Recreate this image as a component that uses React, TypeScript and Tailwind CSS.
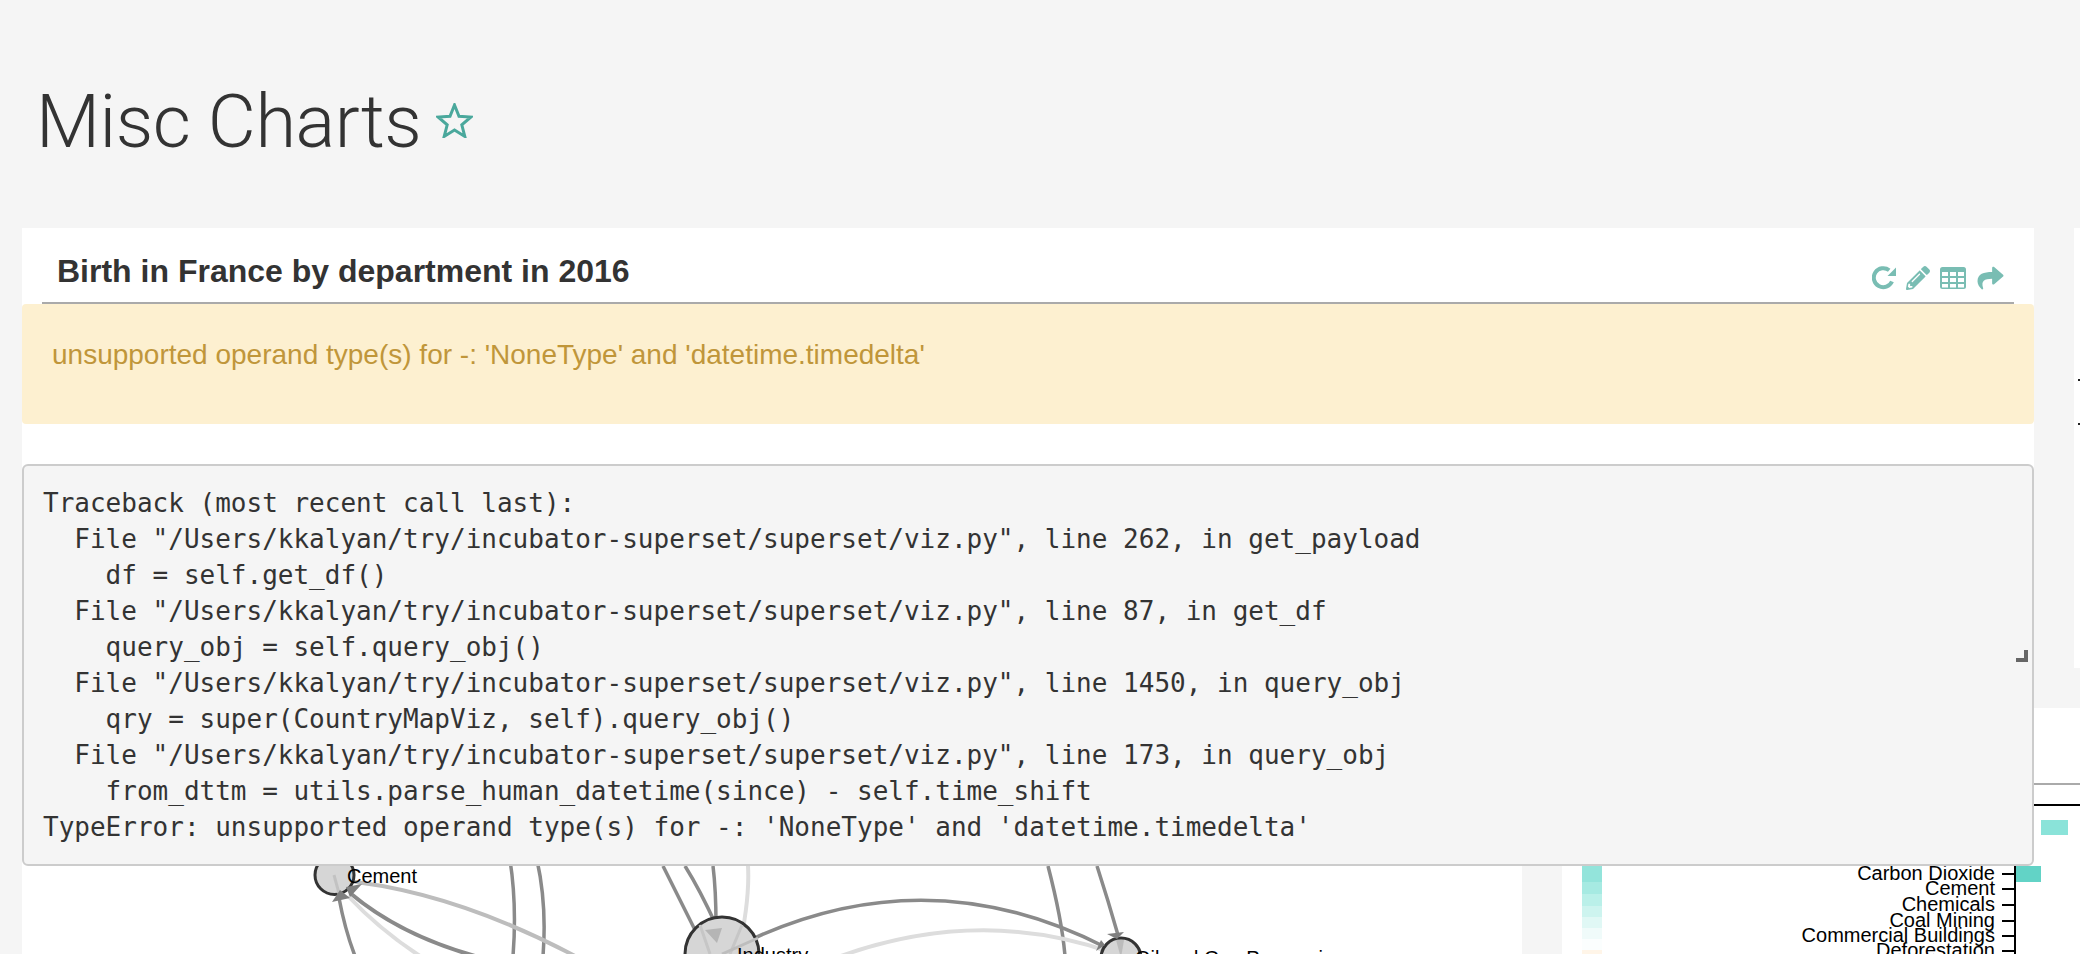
import { FaPencilAlt, FaShare } from "react-icons/fa";

const TRACE = `Traceback (most recent call last):
  File "/Users/kkalyan/try/incubator-superset/superset/viz.py", line 262, in get_payload
    df = self.get_df()
  File "/Users/kkalyan/try/incubator-superset/superset/viz.py", line 87, in get_df
    query_obj = self.query_obj()
  File "/Users/kkalyan/try/incubator-superset/superset/viz.py", line 1450, in query_obj
    qry = super(CountryMapViz, self).query_obj()
  File "/Users/kkalyan/try/incubator-superset/superset/viz.py", line 173, in query_obj
    from_dttm = utils.parse_human_datetime(since) - self.time_shift
TypeError: unsupported operand type(s) for -: 'NoneType' and 'datetime.timedelta'`;

const LEGEND = [
  [866, 16, "#93e4db"],
  [882, 12, "#a6eae2"],
  [894, 12, "#baf0e9"],
  [906, 11, "#cdf4ef"],
  [917, 11, "#e0f8f5"],
  [928, 11, "#f0fbfa"],
  [939, 11, "#fbfefe"],
] as const;

const AXIS = [
  ["Carbon Dioxide", 880, 874],
  ["Cement", 895, 889],
  ["Chemicals", 911, 905],
  ["Coal Mining", 927, 921],
  ["Commercial Buildings", 942, 936],
  ["Deforestation", 957, 951],
] as const;

function RefreshIcon() {
  return (
    <svg viewBox="0 0 24 24" className="w-[24px] h-[24px]" fill="none">
      <path d="M20 15.5 A9.5 9.5 0 1 1 17.2 4.2" stroke="currentColor" strokeWidth="4" />
      <polygon points="24,1.5 24,10 15.5,10" fill="currentColor" />
    </svg>
  );
}

function TableIcon() {
  return (
    <svg viewBox="0 0 26 22" className="w-[26px] h-[22px]">
      <rect width="26" height="22" rx="2.5" fill="currentColor" />
      <g fill="#ffffff">
        <rect x="2" y="5" width="6" height="4" />
        <rect x="10" y="5" width="6" height="4" />
        <rect x="18" y="5" width="6" height="4" />
        <rect x="2" y="11" width="6" height="4" />
        <rect x="10" y="11" width="6" height="4" />
        <rect x="18" y="11" width="6" height="4" />
        <rect x="2" y="17" width="6" height="3.5" />
        <rect x="10" y="17" width="6" height="3.5" />
        <rect x="18" y="17" width="6" height="3.5" />
      </g>
    </svg>
  );
}

function Network() {
  return (
    <svg viewBox="22 708 1500 246" className="block w-full h-full" fill="none">
      <g stroke="#8a8a8a" strokeWidth="3.5">
        <path d="M339 898 Q345 930 355 956" />
        <path d="M510 860 Q517 905 513 956" />
        <path d="M537 860 Q547 905 543 956" />
        <path d="M663 866 Q680 900 700 940" />
        <path d="M685 866 Q700 890 716 925" />
        <path d="M713 866 Q716 890 716 925" />
        <path d="M1048 866 Q1062 920 1065 956" />
        <path d="M1097 866 Q1108 900 1118 935" />
        <path d="M722 954 Q915 850 1105 947" />
        <path d="M350 893 Q400 935 475 956" strokeWidth="4" />
      </g>
      <g strokeWidth="4">
        <path d="M338 880 Q450 890 575 956" stroke="#bdbdbd" />
        <path d="M348 896 Q380 930 420 956" stroke="#dddddd" />
        <path d="M748 866 Q750 900 738 954" stroke="#dddddd" />
        <path d="M830 960 Q975 905 1110 952" stroke="#dddddd" />
      </g>
      <circle cx="334.5" cy="875" r="19.5" fill="#d6d6d6" stroke="#333333" strokeWidth="3" />
      <path d="M334 875 L340 897" stroke="#c2c2c2" strokeWidth="3" />
      <polygon points="332,902 350,898 340,890" fill="#7f7f7f" />
      <polygon points="362,884 350,897 346,887" fill="#7f7f7f" />
      <circle cx="722" cy="954" r="37" fill="#d6d6d6" stroke="#333333" strokeWidth="3" />
      <path d="M700 925 L710 954 M742 925 L730 954" stroke="#c6c6c6" strokeWidth="3" />
      <path d="M722 954 L758 938" stroke="#bdbdbd" strokeWidth="3" />
      <polygon points="705,930 722,928 717,943" fill="#b5b5b5" />
      <circle cx="1121" cy="958" r="20" fill="#d6d6d6" stroke="#333333" strokeWidth="3" />
      <polygon points="1121,958 1116,940 1124,940" fill="#bcbcbc" />
      <polygon points="1107,934 1124,932 1117,939" fill="#7f7f7f" />
      <polygon points="1096,951 1101,940 1105,945" fill="#7f7f7f" />
      <g fill="#000000" fontSize="20" fontFamily="'Liberation Sans', Arial, sans-serif">
        <text x="347" y="883">Cement</text>
        <text x="737" y="962">Industry</text>
        <text x="1135" y="965">Oil and Gas Processing</text>
      </g>
    </svg>
  );
}

function BarChart() {
  return (
    <svg viewBox="1562 708 518 246" className="block w-full h-full" fill="none">
      {LEGEND.map(([y, h, c]) => (
        <rect key={c} x="1582" y={y} width="20" height={h} fill={c} />
      ))}
      <rect x="1582" y="950" width="20" height="4" fill="#fff5e8" />
      <rect x="1562" y="783" width="518" height="2" fill="#aaaaaa" />
      <rect x="1900" y="804" width="180" height="2" fill="#000000" />
      <rect x="2041" y="820" width="27" height="15" fill="#8ae3d9" />
      <rect x="2015" y="866" width="26" height="16" fill="#62d3c6" />
      <rect x="2014" y="806" width="2" height="148" fill="#000000" />
      {AXIS.map(([label, base, tick]) => (
        <g key={label}>
          <rect x="2002" y={tick - 1} width="12" height="2" fill="#000000" />
          <text
            x="1995"
            y={base}
            textAnchor="end"
            fill="#000000"
            fontSize="20"
            fontFamily="'Liberation Sans', Arial, sans-serif"
          >
            {label}
          </text>
        </g>
      ))}
    </svg>
  );
}

export default function App() {
  return (
    <div className="w-[2080px] h-[954px] overflow-hidden bg-[#f5f5f5] text-[#333333] font-['Liberation_Sans',Arial,sans-serif]">
      <header className="h-[228px] pl-[36px] pt-[82px] flex items-start">
        <h1 className="text-[74px] leading-[80px] tracking-[-0.5px] font-light font-['Roboto',sans-serif]">Misc Charts</h1>
        <svg viewBox="0 0 37 35" className="w-[37px] h-[35px] ml-[15px] mt-[21px]" fill="none">
          <polygon
            points="18.5,2 23,13.2 35,14 25.8,21.8 28.8,33.4 18.5,27 8.2,33.4 11.2,21.8 2,14 14,13.2"
            stroke="#4aa89c"
            strokeWidth="3"
          />
        </svg>
      </header>

      <div className="pl-[22px]">
        <div className="flex gap-[40px] h-[440px] mb-[40px]">
          <section className="relative w-[2012px] shrink-0 bg-white">
            <div className="mx-[20px] h-[76px] border-b-2 border-[#aaaaaa] flex items-start justify-between">
              <h2 className="pl-[15px] pt-[23px] text-[32px] leading-[40px] font-bold">Birth in France by department in 2016</h2>
              <div className="pt-[37px] pr-[9px] flex items-center text-[#79bdb3]">
                <RefreshIcon />
                <FaPencilAlt className="w-[24px] h-[24px] ml-[10px]" />
                <span className="ml-[10px]"><TableIcon /></span>
                <FaShare className="w-[29px] h-[26px] ml-[10px]" />
              </div>
            </div>
            <div className="h-[120px] rounded-[4px] bg-[#fdf0d0] px-[30px] pt-[33px] text-[28px] leading-[36px] text-[#c0963a]">
              unsupported operand type(s) for -: 'NoneType' and 'datetime.timedelta'
            </div>
            <div className="absolute z-10 left-0 top-[236px] w-full h-[402px] rounded-[6px] border-2 border-[#cccccc] bg-[#f5f5f5] pl-[19px] pr-[20px] pt-[19px]">
              <pre className="font-['DejaVu_Sans_Mono',monospace] text-[26px] leading-[36px] text-[#333333]">{TRACE}</pre>
              <span className="absolute right-[4px] top-[184px] w-[4px] h-[12px] bg-[#666666]" />
              <span className="absolute right-[4px] top-[192px] w-[12px] h-[4px] bg-[#666666]" />
            </div>
          </section>
          <aside className="flex-1 bg-white pl-[4px] pt-[151px] flex flex-col gap-[42px]">
            <span className="block w-[2px] h-[2px] bg-[#222222]" />
            <span className="block w-[2px] h-[2px] bg-[#222222]" />
          </aside>
        </div>

        <div className="flex gap-[40px] h-[246px]">
          <section className="w-[1500px] shrink-0 bg-white overflow-hidden">
            <Network />
          </section>
          <section className="w-[518px] shrink-0 bg-white overflow-hidden">
            <BarChart />
          </section>
        </div>
      </div>
    </div>
  );
}
